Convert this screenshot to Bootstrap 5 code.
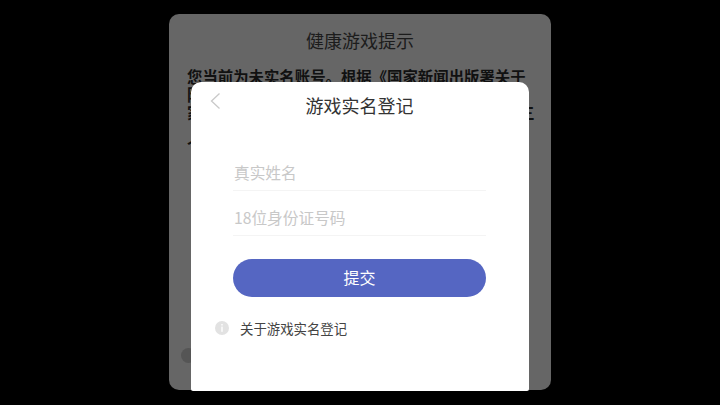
<!DOCTYPE html>
<html lang="zh">
<head>
<meta charset="utf-8">
<title>游戏实名登记</title>
<link href="https://cdn.jsdelivr.net/npm/bootstrap@5.3.0/dist/css/bootstrap.min.css" rel="stylesheet">
<style>
html,body{height:100%;}
body{background:#000;font-family:"Noto Sans CJK SC","Liberation Sans",sans-serif;overflow:hidden;}
.stage{height:405px;padding-top:14px;}
.back-panel{position:relative;width:382px;height:376px;background:#666;border-radius:10px;padding:0 18px;color:#111;}
.back-title{font-size:18px;line-height:24px;padding-top:14px;color:#1c1c1c;margin-bottom:15px;}
.back-line{font-size:15.4px;line-height:18px;font-weight:700;white-space:nowrap;}
.back-gap{margin-top:14px;}
.back-dot{position:absolute;left:12px;top:334px;width:15px;height:15px;border-radius:50%;background:#555;}
.dialog-panel{position:absolute;left:22px;top:68px;width:338px;height:309px;background:#fff;border-radius:10px 10px 2px 2px;padding:0 43px 0 42px;}
.back-arrow{position:absolute;left:18px;top:10px;}
.dialog-title{font-size:18px;line-height:24px;padding:11px 0 0 0;color:#333;margin-bottom:0;}
.field-line{height:45px;border:0;border-bottom:1px solid #f4f4f4;font-size:15.7px;line-height:31px;padding:10px 0 2px 1px;background:transparent;width:100%;border-radius:0;}
.field-line::placeholder{color:#c8c8c8;opacity:1;}
.field-line:focus{box-shadow:none;border-color:#f4f4f4;}
.fields{padding-top:29px;}
.submit-btn{background:#5566c2;border:0;border-radius:19px;height:38px;font-size:16px;color:#fff;margin-top:22.5px;padding:0 0 1px;}
.about-row{position:absolute;left:24px;top:236px;font-size:13.4px;line-height:20px;color:#444;gap:11px;}
</style>
</head>
<body>
<div class="stage d-flex justify-content-center">
  <div class="back-panel">
    <div class="back-title text-center">健康游戏提示</div>
    <div class="back-line">您当前为未实名账号。根据《国家新闻出版署关于</div>
    <div class="back-line">防止未成年人沉迷网络游戏的通知》要求，所有用</div>
    <div class="back-line">家规定，未实名用户1天内游戏时长累计不能超过三</div>
    <div class="back-line back-gap">个小时。</div>
    <div class="back-dot"></div>
    <div class="dialog-panel">
      <svg class="back-arrow" width="13" height="18" viewBox="0 0 13 18" fill="none" stroke="#c9c9c9" stroke-width="1.3"><path d="M10.5 1.5 2.5 9l8 7.5"/></svg>
      <div class="dialog-title text-center">游戏实名登记</div>
      <div class="fields">
        <input class="form-control field-line" placeholder="真实姓名">
        <input class="form-control field-line" placeholder="18位身份证号码">
      </div>
      <button type="button" class="btn submit-btn w-100">提交</button>
      <div class="about-row d-flex align-items-center">
        <svg width="14" height="14" viewBox="0 0 14 14"><circle cx="7" cy="7" r="7" fill="#e2e2e2"/><rect x="6.3" y="3" width="1.4" height="1.5" fill="#fff"/><rect x="6.3" y="5.6" width="1.4" height="5.2" fill="#fff"/></svg>
        <span>关于游戏实名登记</span>
      </div>
    </div>
  </div>
</div>
<script src="https://cdn.jsdelivr.net/npm/bootstrap@5.3.0/dist/js/bootstrap.bundle.min.js"></script>
</body>
</html>
